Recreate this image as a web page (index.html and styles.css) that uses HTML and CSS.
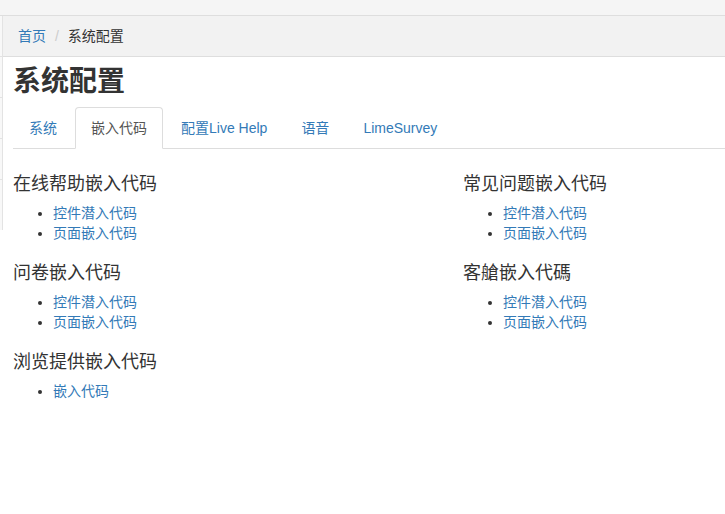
FILE: index.html
```html
<!DOCTYPE html>
<html lang="zh">
<head>
<meta charset="utf-8">
<title>系统配置</title>
<link rel="stylesheet" href="styles.css">
</head>
<body>
<div class="topbar"></div>
<div class="layout">
  <div class="sidebar">
    <div class="side-item"></div>
    <div class="side-item"></div>
    <div class="side-item"></div>
    <div class="side-item"></div>
    <div class="side-item last"></div>
  </div>
  <div class="main">
    <ol class="breadcrumb">
      <li><a href="#">首页</a></li>
      <li class="active">系统配置</li>
    </ol>
    <div class="content">
      <h1 class="title">系统配置</h1>
      <ul class="tabs">
        <li><a href="#">系统</a></li>
        <li class="active"><a href="#">嵌入代码</a></li>
        <li><a href="#">配置Live Help</a></li>
        <li><a href="#">语音</a></li>
        <li><a href="#">LimeSurvey</a></li>
      </ul>
      <div class="tab-content">
        <div class="col">
          <h4 class="sec-title">在线帮助嵌入代码</h4>
          <ul class="links">
            <li><a href="#">控件潜入代码</a></li>
            <li><a href="#">页面嵌入代码</a></li>
          </ul>
          <h4 class="sec-title">问卷嵌入代码</h4>
          <ul class="links">
            <li><a href="#">控件潜入代码</a></li>
            <li><a href="#">页面嵌入代码</a></li>
          </ul>
          <h4 class="sec-title">浏览提供嵌入代码</h4>
          <ul class="links">
            <li><a href="#">嵌入代码</a></li>
          </ul>
        </div>
        <div class="col">
          <h4 class="sec-title">常见问题嵌入代码</h4>
          <ul class="links">
            <li><a href="#">控件潜入代码</a></li>
            <li><a href="#">页面嵌入代码</a></li>
          </ul>
          <h4 class="sec-title">客艙嵌入代碼</h4>
          <ul class="links">
            <li><a href="#">控件潜入代码</a></li>
            <li><a href="#">页面嵌入代码</a></li>
          </ul>
        </div>
      </div>
    </div>
  </div>
</div>
</body>
</html>
```
FILE: styles.css
```css
html, body {
  margin: 0;
  padding: 0;
  background: #fff;
}
body {
  font-family: "Liberation Sans", "Noto Sans CJK SC", sans-serif;
  font-size: 14px;
  line-height: 20px;
  color: #333;
}
a {
  color: #337ab7;
  text-decoration: none;
}
.topbar {
  height: 15px;
  background: #f5f5f5;
  border-bottom: 1px solid #dedede;
}
.layout {
  display: flex;
  align-items: flex-start;
}
.sidebar {
  width: 2px;
  flex: none;
  background: #f8f8f8;
  border-right: 1px solid #e3e3e3;
}
.side-item {
  height: 40px;
  border-bottom: 1px solid #e3e3e3;
}
.side-item.last {
  height: 50px;
  border-bottom: none;
}
.main {
  flex: 1;
  min-width: 0;
}
.breadcrumb {
  margin: 0;
  list-style: none;
  padding: 10px 15px;
  background: #f2f2f2;
  border-bottom: 1px solid #dedede;
}
.breadcrumb li {
  display: inline-block;
}
.breadcrumb li + li::before {
  content: "/\00a0";
  padding: 0 5px;
  color: #ccc;
}
.breadcrumb .active {
  color: #333;
}
.content {
  padding-left: 10px;
}
.title {
  margin: 9px 0 10px;
  font-size: 28px;
  line-height: 31px;
  font-weight: bold;
  color: #333;
}
.tabs {
  list-style: none;
  margin: 0;
  padding: 0;
  display: flex;
  border-bottom: 1px solid #ddd;
}
.tabs li {
  margin-right: 2px;
  margin-bottom: -1px;
}
.tabs a {
  display: block;
  padding: 10px 15px;
  line-height: 20px;
  border: 1px solid transparent;
  border-radius: 4px 4px 0 0;
}
.tabs .active a {
  color: #555;
  background: #fff;
  border-color: #ddd #ddd transparent;
}
.tab-content {
  display: grid;
  grid-template-columns: 450px 1fr;
  padding-top: 15px;
}
.sec-title {
  margin: 10px 0 9px;
  font-size: 18px;
  line-height: 20px;
  font-weight: normal;
  color: #333;
}
.links {
  margin: 0 0 20px;
  padding-left: 40px;
}
```
